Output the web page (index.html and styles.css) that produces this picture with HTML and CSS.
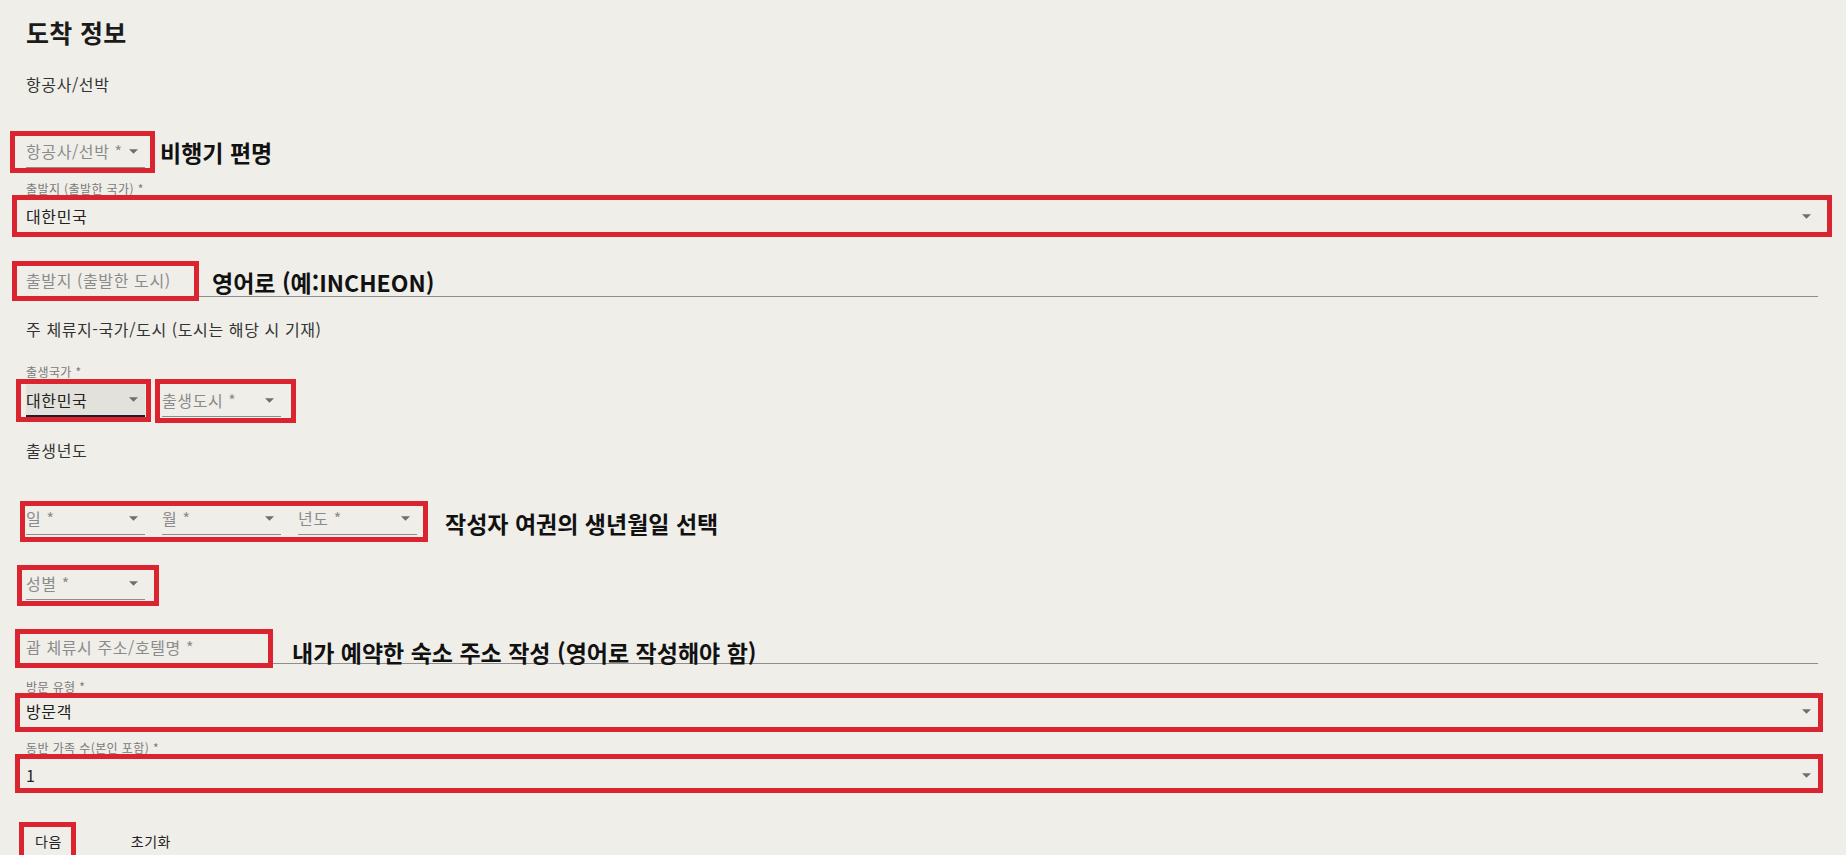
FILE: index.html
```html
<!DOCTYPE html>
<html lang="ko">
<head>
<meta charset="utf-8">
<title>도착 정보</title>
<link rel="stylesheet" href="styles.css">
</head>
<body>
<main class="page">
  <h1 class="title">도착 정보</h1>
  <p class="section">항공사/선박</p>

  <div class="row mt-39">
    <div class="field sm hl hl-air">
      <span class="ph">항공사/선박 *</span>
      <svg class="arrow" viewBox="0 0 10 5"><path d="M0 0H10L5 5Z"/></svg>
    </div>
    <span class="note">비행기 편명</span>
  </div>

  <label class="label mt-13">출발지 (출발한 국가) *</label>
  <div class="field mt-3 hl hl-country">
    <span class="val">대한민국</span>
    <svg class="arrow" viewBox="0 0 10 5"><path d="M0 0H10L5 5Z"/></svg>
  </div>

  <div class="field mt-31">
    <span class="ph slot slot-city hl hl-city">출발지 (출발한 도시)</span>
    <span class="note note-city">영어로 (예:INCHEON)</span>
  </div>

  <p class="section mt-20">주 체류지-국가/도시 (도시는 해당 시 기재)</p>

  <label class="label mt-23">출생국가 *</label>
  <div class="row gap-17 mt-4">
    <div class="field sm focus hl hl-birth">
      <span class="val">대한민국</span>
      <svg class="arrow" viewBox="0 0 10 5"><path d="M0 0H10L5 5Z"/></svg>
    </div>
    <div class="field sm hl hl-bcity">
      <span class="ph">출생도시 *</span>
      <svg class="arrow" viewBox="0 0 10 5"><path d="M0 0H10L5 5Z"/></svg>
    </div>
  </div>

  <p class="section mt-21">출생년도</p>

  <div class="row mt-40">
    <div class="row gap-17 hl hl-date">
      <div class="field sm">
        <span class="ph">일 *</span>
        <svg class="arrow" viewBox="0 0 10 5"><path d="M0 0H10L5 5Z"/></svg>
      </div>
      <div class="field sm">
        <span class="ph">월 *</span>
        <svg class="arrow" viewBox="0 0 10 5"><path d="M0 0H10L5 5Z"/></svg>
      </div>
      <div class="field sm">
        <span class="ph">년도 *</span>
        <svg class="arrow" viewBox="0 0 10 5"><path d="M0 0H10L5 5Z"/></svg>
      </div>
    </div>
    <span class="note note-date">작성자 여권의 생년월일 선택</span>
  </div>

  <div class="row mt-32">
    <div class="field sm hl hl-sex">
      <span class="ph">성별 *</span>
      <svg class="arrow" viewBox="0 0 10 5"><path d="M0 0H10L5 5Z"/></svg>
    </div>
  </div>

  <div class="field mt-31">
    <span class="ph slot slot-addr hl hl-addr">괌 체류시 주소/호텔명 *</span>
    <span class="note note-addr">내가 예약한 숙소 주소 작성 (영어로 작성해야 함)</span>
  </div>

  <label class="label mt-15">방문 유형 *</label>
  <div class="field hl hl-visit">
    <span class="val">방문객</span>
    <svg class="arrow" viewBox="0 0 10 5"><path d="M0 0H10L5 5Z"/></svg>
  </div>

  <label class="label mt-12">동반 가족 수(본인 포함) *</label>
  <div class="field mt-3 hl hl-family">
    <span class="val">1</span>
    <svg class="arrow" viewBox="0 0 10 5"><path d="M0 0H10L5 5Z"/></svg>
  </div>

  <div class="actions">
    <button class="btn hl hl-next" type="button">다음</button>
    <button class="btn btn-reset" type="button">초기화</button>
  </div>
</main>
</body>
</html>
```

FILE: styles.css
```css
* { box-sizing: border-box; }
html, body { margin: 0; }
body {
  background: #efeee9;
  font-family: "Noto Sans CJK KR", "Noto Sans", sans-serif;
  color: #222;
  overflow: hidden;
}
.page {
  width: 1846px;
  height: 855px;
  padding: 16px 28px 0 26px;
}
.title {
  margin: 0;
  font-size: 25px;
  line-height: 32px;
  font-weight: 700;
  color: #1b1b1b;
  letter-spacing: 0.3px;
}
.section {
  margin: 24px 0 0;
  font-size: 16px;
  line-height: 24px;
  color: #333;
  letter-spacing: 0.6px;
}
.label {
  display: block;
  font-size: 12px;
  line-height: 16px;
  color: #7a7a7a;
  letter-spacing: 0.4px;
}
.row { display: flex; align-items: center; }
.gap-17 { gap: 17px; }

.field {
  position: relative;
  display: flex;
  align-items: center;
  height: 33px;
  border-bottom: 1px solid #8d8d8d;
  font-size: 16px;
  line-height: 24px;
  letter-spacing: 0.6px;
}
.field.sm { width: 119px; flex: none; }
.field.focus {
  background: #e2e1dc;
  border-bottom: 2px solid #1d1d2b;
}
.ph { color: #8b8b8b; white-space: nowrap; }
.val { color: #222; }
.arrow {
  margin-left: auto;
  margin-right: 7px;
  width: 9px;
  height: 5px;
  flex: none;
  fill: #6e6e6e;
}
.slot {
  position: relative;
  align-self: stretch;
  display: flex;
  align-items: center;
  flex: none;
}
.slot-city { width: 160px; }
.slot-addr { width: 240px; }

.note {
  font-size: 23px;
  line-height: 24px;
  font-weight: 700;
  color: #111;
  white-space: nowrap;
  margin-left: 15px;
  letter-spacing: 0;
}
.note-city { margin-left: 26px; margin-top: 4px; }
.note-date { margin-left: 28px; margin-top: 9px; }
.note-addr { margin-left: 26px; margin-top: 9px; }

.mt-3 { margin-top: 3px; }
.mt-4 { margin-top: 4px; }
.mt-12 { margin-top: 12px; }
.mt-13 { margin-top: 13px; }
.mt-15 { margin-top: 15px; }
.mt-20 { margin-top: 20px; }
.mt-21 { margin-top: 21px; }
.mt-23 { margin-top: 23px; }
.mt-31 { margin-top: 31px; }
.mt-32 { margin-top: 32px; }
.mt-39 { margin-top: 39px; }
.mt-40 { margin-top: 40px; }

/* red annotation boxes drawn over the form */
.hl { position: relative; }
.hl::after {
  content: "";
  position: absolute;
  border: 5px solid #da2530;
  pointer-events: none;
}
.hl-air::after { top: -4px; bottom: -6px; left: -16px; right: -10px; }
.hl-country::after { top: -5px; bottom: -5px; left: -14px; right: -14px; }
.hl-city::after { top: -3px; bottom: -5px; left: -14px; right: -13px; }
.hl-birth::after { top: -5px; bottom: -7px; left: -10px; right: -6px; }
.hl-bcity::after { top: -5px; bottom: -7px; left: -7px; right: -15px; }
.hl-date::after { top: -1px; bottom: -7px; left: -6px; right: -11px; }
.hl-sex::after { top: -2px; bottom: -7px; left: -9px; right: -14px; }
.hl-addr::after { top: -2px; bottom: -5px; left: -11px; right: -7px; }
.hl-visit::after { top: -2px; bottom: -5px; left: -11px; right: -5px; }
.hl-family::after { top: -5px; bottom: -2px; left: -11px; right: -5px; }
.hl-next::after { top: -5px; bottom: -8px; left: -7px; right: -5px; }

.actions {
  display: flex;
  margin-top: 35px;
}
.btn {
  font-family: inherit;
  font-size: 14px;
  line-height: 20px;
  padding: 4px 9px;
  background: none;
  border: 0;
  color: #222;
  letter-spacing: 0.5px;
}
.btn-reset { margin-left: 51px; }
```
